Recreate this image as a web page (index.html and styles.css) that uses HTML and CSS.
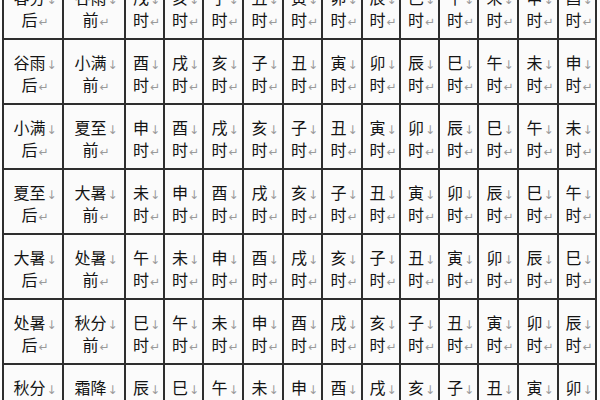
FILE: index.html
```html
<!DOCTYPE html>
<html lang="zh-CN">
<head>
<meta charset="utf-8">
<title>时辰表</title>
<link rel="stylesheet" href="styles.css">
</head>
<body>
<div class="grid">
<div class="c"><span>春分<i>↓</i></span><span>后<i>↵</i></span></div>
<div class="c"><span>谷雨<i>↓</i></span><span>前<i>↵</i></span></div>
<div class="c"><span>戌<i>↓</i></span><span>时<i>↵</i></span></div>
<div class="c"><span>亥<i>↓</i></span><span>时<i>↵</i></span></div>
<div class="c"><span>子<i>↓</i></span><span>时<i>↵</i></span></div>
<div class="c"><span>丑<i>↓</i></span><span>时<i>↵</i></span></div>
<div class="c"><span>寅<i>↓</i></span><span>时<i>↵</i></span></div>
<div class="c"><span>卯<i>↓</i></span><span>时<i>↵</i></span></div>
<div class="c"><span>辰<i>↓</i></span><span>时<i>↵</i></span></div>
<div class="c"><span>巳<i>↓</i></span><span>时<i>↵</i></span></div>
<div class="c"><span>午<i>↓</i></span><span>时<i>↵</i></span></div>
<div class="c"><span>未<i>↓</i></span><span>时<i>↵</i></span></div>
<div class="c"><span>申<i>↓</i></span><span>时<i>↵</i></span></div>
<div class="c"><span>酉<i>↓</i></span><span>时<i>↵</i></span></div>

<div class="c"><span>谷雨<i>↓</i></span><span>后<i>↵</i></span></div>
<div class="c"><span>小满<i>↓</i></span><span>前<i>↵</i></span></div>
<div class="c"><span>酉<i>↓</i></span><span>时<i>↵</i></span></div>
<div class="c"><span>戌<i>↓</i></span><span>时<i>↵</i></span></div>
<div class="c"><span>亥<i>↓</i></span><span>时<i>↵</i></span></div>
<div class="c"><span>子<i>↓</i></span><span>时<i>↵</i></span></div>
<div class="c"><span>丑<i>↓</i></span><span>时<i>↵</i></span></div>
<div class="c"><span>寅<i>↓</i></span><span>时<i>↵</i></span></div>
<div class="c"><span>卯<i>↓</i></span><span>时<i>↵</i></span></div>
<div class="c"><span>辰<i>↓</i></span><span>时<i>↵</i></span></div>
<div class="c"><span>巳<i>↓</i></span><span>时<i>↵</i></span></div>
<div class="c"><span>午<i>↓</i></span><span>时<i>↵</i></span></div>
<div class="c"><span>未<i>↓</i></span><span>时<i>↵</i></span></div>
<div class="c"><span>申<i>↓</i></span><span>时<i>↵</i></span></div>

<div class="c"><span>小满<i>↓</i></span><span>后<i>↵</i></span></div>
<div class="c"><span>夏至<i>↓</i></span><span>前<i>↵</i></span></div>
<div class="c"><span>申<i>↓</i></span><span>时<i>↵</i></span></div>
<div class="c"><span>酉<i>↓</i></span><span>时<i>↵</i></span></div>
<div class="c"><span>戌<i>↓</i></span><span>时<i>↵</i></span></div>
<div class="c"><span>亥<i>↓</i></span><span>时<i>↵</i></span></div>
<div class="c"><span>子<i>↓</i></span><span>时<i>↵</i></span></div>
<div class="c"><span>丑<i>↓</i></span><span>时<i>↵</i></span></div>
<div class="c"><span>寅<i>↓</i></span><span>时<i>↵</i></span></div>
<div class="c"><span>卯<i>↓</i></span><span>时<i>↵</i></span></div>
<div class="c"><span>辰<i>↓</i></span><span>时<i>↵</i></span></div>
<div class="c"><span>巳<i>↓</i></span><span>时<i>↵</i></span></div>
<div class="c"><span>午<i>↓</i></span><span>时<i>↵</i></span></div>
<div class="c"><span>未<i>↓</i></span><span>时<i>↵</i></span></div>

<div class="c"><span>夏至<i>↓</i></span><span>后<i>↵</i></span></div>
<div class="c"><span>大暑<i>↓</i></span><span>前<i>↵</i></span></div>
<div class="c"><span>未<i>↓</i></span><span>时<i>↵</i></span></div>
<div class="c"><span>申<i>↓</i></span><span>时<i>↵</i></span></div>
<div class="c"><span>酉<i>↓</i></span><span>时<i>↵</i></span></div>
<div class="c"><span>戌<i>↓</i></span><span>时<i>↵</i></span></div>
<div class="c"><span>亥<i>↓</i></span><span>时<i>↵</i></span></div>
<div class="c"><span>子<i>↓</i></span><span>时<i>↵</i></span></div>
<div class="c"><span>丑<i>↓</i></span><span>时<i>↵</i></span></div>
<div class="c"><span>寅<i>↓</i></span><span>时<i>↵</i></span></div>
<div class="c"><span>卯<i>↓</i></span><span>时<i>↵</i></span></div>
<div class="c"><span>辰<i>↓</i></span><span>时<i>↵</i></span></div>
<div class="c"><span>巳<i>↓</i></span><span>时<i>↵</i></span></div>
<div class="c"><span>午<i>↓</i></span><span>时<i>↵</i></span></div>

<div class="c"><span>大暑<i>↓</i></span><span>后<i>↵</i></span></div>
<div class="c"><span>处暑<i>↓</i></span><span>前<i>↵</i></span></div>
<div class="c"><span>午<i>↓</i></span><span>时<i>↵</i></span></div>
<div class="c"><span>未<i>↓</i></span><span>时<i>↵</i></span></div>
<div class="c"><span>申<i>↓</i></span><span>时<i>↵</i></span></div>
<div class="c"><span>酉<i>↓</i></span><span>时<i>↵</i></span></div>
<div class="c"><span>戌<i>↓</i></span><span>时<i>↵</i></span></div>
<div class="c"><span>亥<i>↓</i></span><span>时<i>↵</i></span></div>
<div class="c"><span>子<i>↓</i></span><span>时<i>↵</i></span></div>
<div class="c"><span>丑<i>↓</i></span><span>时<i>↵</i></span></div>
<div class="c"><span>寅<i>↓</i></span><span>时<i>↵</i></span></div>
<div class="c"><span>卯<i>↓</i></span><span>时<i>↵</i></span></div>
<div class="c"><span>辰<i>↓</i></span><span>时<i>↵</i></span></div>
<div class="c"><span>巳<i>↓</i></span><span>时<i>↵</i></span></div>

<div class="c"><span>处暑<i>↓</i></span><span>后<i>↵</i></span></div>
<div class="c"><span>秋分<i>↓</i></span><span>前<i>↵</i></span></div>
<div class="c"><span>巳<i>↓</i></span><span>时<i>↵</i></span></div>
<div class="c"><span>午<i>↓</i></span><span>时<i>↵</i></span></div>
<div class="c"><span>未<i>↓</i></span><span>时<i>↵</i></span></div>
<div class="c"><span>申<i>↓</i></span><span>时<i>↵</i></span></div>
<div class="c"><span>酉<i>↓</i></span><span>时<i>↵</i></span></div>
<div class="c"><span>戌<i>↓</i></span><span>时<i>↵</i></span></div>
<div class="c"><span>亥<i>↓</i></span><span>时<i>↵</i></span></div>
<div class="c"><span>子<i>↓</i></span><span>时<i>↵</i></span></div>
<div class="c"><span>丑<i>↓</i></span><span>时<i>↵</i></span></div>
<div class="c"><span>寅<i>↓</i></span><span>时<i>↵</i></span></div>
<div class="c"><span>卯<i>↓</i></span><span>时<i>↵</i></span></div>
<div class="c"><span>辰<i>↓</i></span><span>时<i>↵</i></span></div>

<div class="c"><span>秋分<i>↓</i></span><span>后<i>↵</i></span></div>
<div class="c"><span>霜降<i>↓</i></span><span>前<i>↵</i></span></div>
<div class="c"><span>辰<i>↓</i></span><span>时<i>↵</i></span></div>
<div class="c"><span>巳<i>↓</i></span><span>时<i>↵</i></span></div>
<div class="c"><span>午<i>↓</i></span><span>时<i>↵</i></span></div>
<div class="c"><span>未<i>↓</i></span><span>时<i>↵</i></span></div>
<div class="c"><span>申<i>↓</i></span><span>时<i>↵</i></span></div>
<div class="c"><span>酉<i>↓</i></span><span>时<i>↵</i></span></div>
<div class="c"><span>戌<i>↓</i></span><span>时<i>↵</i></span></div>
<div class="c"><span>亥<i>↓</i></span><span>时<i>↵</i></span></div>
<div class="c"><span>子<i>↓</i></span><span>时<i>↵</i></span></div>
<div class="c"><span>丑<i>↓</i></span><span>时<i>↵</i></span></div>
<div class="c"><span>寅<i>↓</i></span><span>时<i>↵</i></span></div>
<div class="c"><span>卯<i>↓</i></span><span>时<i>↵</i></span></div>
</div>
</body>
</html>
```

FILE: styles.css
```css
html, body {
  margin: 0;
  padding: 0;
  background: #fdfdfd;
  overflow: hidden;
}
body {
  width: 600px;
  height: 400px;
  font-family: "Noto Sans CJK SC", "Noto Sans", sans-serif;
}
.grid {
  display: grid;
  grid-template-columns: 58px 60px 37px 37px 38px 38px 37px 38px 36px 37px 37px 38px 38px 36px;
  grid-auto-rows: 63px;
  gap: 2px;
  padding: 2px;
  background: #2e2e2e;
  margin: -27px 0 0 2px;
  width: max-content;
}
.c {
  background: #fbfbfb;
  display: flex;
  flex-direction: column;
  justify-content: center;
  align-items: center;
  padding-left: 4px;
  padding-top: 2px;
  color: #141414;
  font-size: 16px;
  line-height: 22px;
}
.c span {
  display: block;
  height: 22px;
  white-space: nowrap;
}
.c i {
  font-style: normal;
  font-family: "DejaVu Sans", sans-serif;
  font-size: 12px;
  line-height: 0;
  color: #9a9a9a;
  margin-left: 1px;
}
```
